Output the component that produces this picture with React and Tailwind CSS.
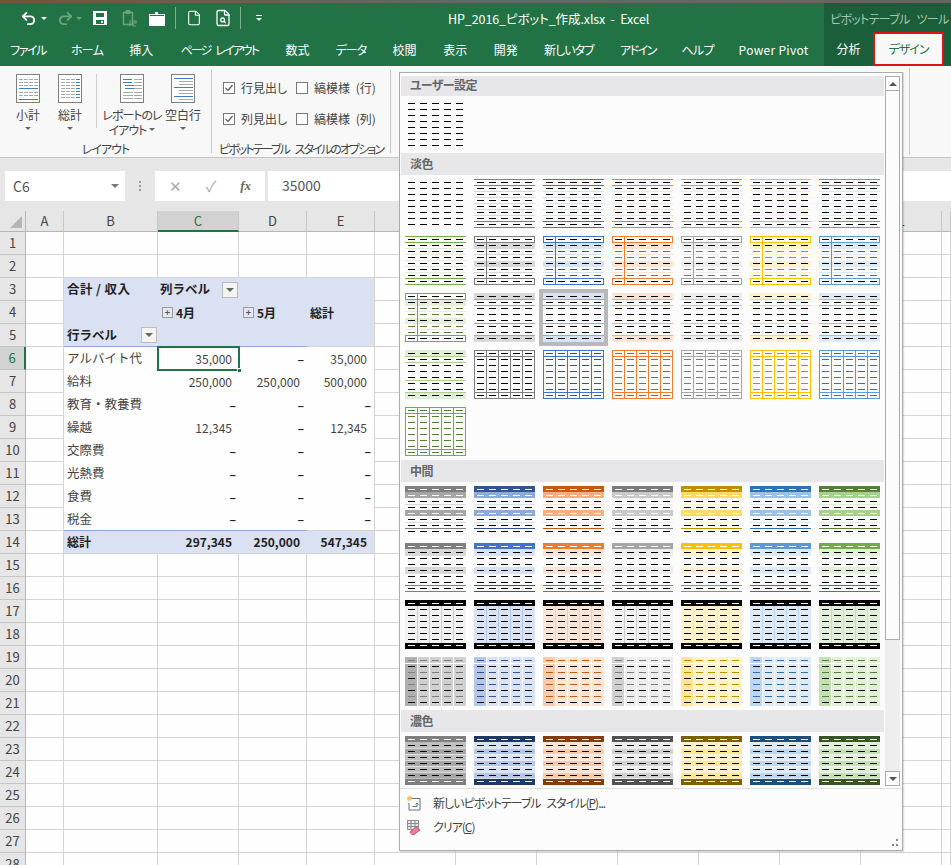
import React from 'react'
import { Undo2, Redo2, File, FileSearch } from 'lucide-react'

const tabs = [
  ['ファイル', 'w-[34px] tracking-[-1.5px]'], ['ホーム', 'w-[31px] tracking-[-0.7px]'], ['挿入', 'w-[24px]'], ['ページ レイアウト', 'w-[79px] tracking-[-1.9px] [word-spacing:4px]'],
  ['数式', 'w-[24px]'], ['データ', 'w-[30px] tracking-[-1px]'], ['校閲', 'w-[24px]'], ['表示', 'w-[24px]'], ['開発', 'w-[24px]'],
  ['新しいタブ', 'w-[49px] tracking-[-1px]'], ['アドイン', 'w-[36px] tracking-[-1.5px]'], ['ヘルプ', 'w-[30px] tracking-[-0.7px]'], ['Power Pivot', 'w-[69px] tracking-[0.3px]'],
]

const light = [
  { c: '#7f7f7f', t: '#d9d9d9', d: '#000000' },
  { c: '#4472c4', t: '#d9e2f3', d: '#2f5597' },
  { c: '#ed7d31', t: '#fbe4d5', d: '#c55a11' },
  { c: '#a5a5a5', t: '#ededed', d: '#7b7b7b' },
  { c: '#ffc000', t: '#fff2cc', d: '#bf8f00' },
  { c: '#5b9bd5', t: '#deeaf6', d: '#2e74b5' },
  { c: '#70ad47', t: '#e2efd9', d: '#538135' },
]
const mid = ['#a6a6a6', '#8eaadb', '#f4b083', '#c9c9c9', '#ffd966', '#9cc2e5', '#a8d08d']
const deep = ['#7f7f7f', '#1f3864', '#833c0b', '#525252', '#7f6000', '#1f4e79', '#385623']
const head = ['#7f7f7f', '#2f5597', '#c55a11', '#7b7b7b', '#bf8f00', '#2e74b5', '#538135']
const darkBand = ['#a6a6a6', '#b4c7e7', '#f8cbad', '#d0d0d0', '#ffe699', '#bdd7ee', '#c5e0b4']
const darkBase = ['#bfbfbf', '#dae3f3', '#fbe5d6', '#ededed', '#fff2cc', '#deebf7', '#e2f0d9']
const m3Base = ['#f2f2f2', '#dae3f3', '#fbe5d6', '#f2f2f2', '#fff2cc', '#deebf7', '#e2f0d9']
const m3Line = ['#cccccc', '#b4c7e7', '#f8cbad', '#cccccc', '#ffe699', '#bdd7ee', '#c5e0b4']

const dashRows = [3, 9, 15, 21, 27, 33, 39, 45]
const dashCols = [3, 15, 27, 39, 51]

const Dashes = ({ color }) =>
  dashRows.map((y, j) =>
    dashCols.map((x, i) => <rect key={`${j}-${i}`} x={x} y={y} width="7" height="1" fill={color(j, i)} />)
  )

const Bar = ({ y, h = 1, fill, o }) => <rect x="0" y={y} width="61" height={h} fill={fill} opacity={o} />
const Col = ({ x, fill }) => <rect x={x} y="0" width="1" height="49" fill={fill} />

const Swatch = ({ type, i = 0 }) => {
  const t = light[i]
  let body = null
  if (type === 'plain') body = <Dashes color={() => '#000'} />
  if (type === 'l1') {
    body = (
      <>
        {[12, 18, 24, 30, 36].map((y) => <Bar key={y} y={y} fill={t.t} />)}
        <Bar y={0} fill={t.c} /><Bar y={6} fill={t.c} /><Bar y={42} fill={t.c} /><Bar y={48} fill={t.c} />
        <Dashes color={() => '#000'} />
      </>
    )
  }
  if (type === 'l2') {
    body = (
      <>
        <Bar y={7} h={6} fill={t.t} /><Bar y={25} h={6} fill={t.t} /><Bar y={18} fill={t.t} /><Bar y={36} fill={t.t} />
        <Col x={12} fill={t.c} />
        <rect x="0.5" y="0.5" width="60" height="6" fill="none" stroke={t.c} />
        <rect x="0.5" y="42.5" width="60" height="6" fill="none" stroke={t.c} />
        <Dashes color={(j) => ([2, 3, 5, 6].includes(j) ? t.d : '#000')} />
      </>
    )
  }
  if (type === 'l3') {
    body = (
      <>
        <Bar y={0} h={6} fill={t.t} /><Bar y={42} h={7} fill={t.t} />
        {[6, 12, 30, 42].map((y) => <Bar key={y} y={y} fill={mid[i]} />)}
        <Dashes color={() => '#000'} />
      </>
    )
  }
  if (type === 'grid') {
    body = (
      <>
        <rect x="0.5" y="0.5" width="60" height="48" fill="none" stroke={t.c} />
        <Bar y={6} fill={t.c} /><Bar y={42} fill={t.c} />
        {[12, 24, 36, 48].map((x) => <Col key={x} x={x} fill={t.c} />)}
        <Dashes color={() => t.d} />
      </>
    )
  }
  if (type === 'm1') {
    body = (
      <>
        <Bar y={0} h={6} fill={head[i]} /><Bar y={6} h={6} fill={mid[i]} /><Bar y={24} h={6} fill={mid[i]} />
        <Bar y={18} fill={t.t} /><Bar y={36} fill={t.t} /><Bar y={42} fill={head[i]} />
        <Dashes color={(j) => ([0, 1, 4].includes(j) ? '#fff' : '#000')} />
      </>
    )
  }
  if (type === 'm2') {
    body = (
      <>
        <Bar y={0} h={6} fill={t.c} /><Bar y={6} h={7} fill={t.t} /><Bar y={24} h={7} fill={t.t} />
        <Bar y={42} fill={head[i]} /><Bar y={48} fill={head[i]} />
        <Dashes color={(j) => (j === 0 ? '#fff' : '#000')} />
      </>
    )
  }
  if (type === 'm3') {
    body = (
      <>
        <rect x="0" y="0" width="61" height="49" fill={m3Base[i]} />
        {[12, 24, 36, 48].map((x) => <Col key={x} x={x} fill={m3Line[i]} />)}
        <Bar y={0} h={6} fill="#000" /><Bar y={43} h={6} fill="#000" />
        <Dashes color={(j) => (j === 0 || j === 7 ? '#fff' : '#000')} />
      </>
    )
  }
  if (type === 'm4') {
    body = (
      <>
        <rect x="0" y="0" width="61" height="49" fill={i === 0 ? '#d0d0d0' : darkBase[i]} />
        <rect x="0" y="0" width="12" height="49" fill={i === 0 ? '#b0b0b0' : darkBand[i]} />
        {[12, 24, 36, 48].map((x) => <Col key={x} x={x} fill="#ffffff" />)}
        <Bar y={6} fill="#ffffff" />
        <Dashes color={(j) => (j % 2 === 0 ? head[i] : '#000')} />
      </>
    )
  }
  if (type === 'd1') {
    body = (
      <>
        <rect x="0" y="0" width="61" height="49" fill={darkBase[i]} />
        {[12, 24, 36].map((y) => <Bar key={y} y={y} h={6} fill={darkBand[i]} />)}
        {[12, 18, 24, 30, 36].map((y) => <Bar key={y} y={y} fill="#ffffff" o={0.6} />)}
        <Bar y={0} h={6} fill={deep[i]} /><Bar y={43} h={6} fill={deep[i]} />
        <Dashes color={(j) => (j === 0 || j === 7 ? '#fff' : '#000')} />
      </>
    )
  }
  return (
    <svg width="61" height="49" viewBox="0 0 61 49" shapeRendering="crispEdges" className="block">
      {body}
    </svg>
  )
}

const seven = (type) => [0, 1, 2, 3, 4, 5, 6].map((i) => ({ type, i }))

const sections = [
  { title: 'ユーザー設定', h: 'h-[20px] pb-[2px]', items: [{ type: 'plain' }] },
  { title: '淡色', h: 'h-[22px]', items: [{ type: 'plain' }, ...seven('l1').slice(0, 6), ...seven('l1').slice(6), ...seven('l2'), ...seven('l3'), ...seven('grid')] },
  { title: '中間', h: 'h-[22px]', items: [...seven('m1'), ...seven('m2'), ...seven('m3'), ...seven('m4')] },
  { title: '濃色', h: 'h-[22px]', items: seven('d1') },
]

const StyleGallery = () => (
  <div className="absolute left-[399px] top-[72px] z-20 flex h-[779px] w-[504px] flex-col border border-[#ababab] bg-[#fcfcfc] shadow-[1px_1px_1px_rgba(0,0,0,0.12)]">
    <div className="flex h-[713px] pt-[3px]">
      <div className="w-[484px] overflow-hidden pl-[1px]">
        {sections.map((s) => (
          <div key={s.title}>
            <div className={`${s.h} flex items-center bg-[#e7e7ea] pl-[9px] text-[12px] font-bold tracking-[-0.6px] text-[#666]`}>{s.title}</div>
            <div className="grid grid-cols-[repeat(7,61px)] gap-2 py-1 pl-[4px]">
              {s.items.map((it, n) => (
                <div key={n} className={it.type === 'l3' && it.i === 1 ? 'outline-4 outline-[#b9b9b9]' : ''}>
                  <Swatch type={it.type} i={it.i} />
                </div>
              ))}
            </div>
          </div>
        ))}
      </div>
      <div className="ml-[1px] flex w-[15px] flex-col bg-[#eeeeee]">
        <div className="flex h-[15px] items-center justify-center border border-[#ababab] bg-[#fcfcfc]">
          <span className="h-0 w-0 border-x-[4px] border-b-[4px] border-x-transparent border-b-[#555]" />
        </div>
        <div className="h-[549px] border-x border-b border-[#ababab] bg-[#fcfcfc]" />
        <div className="flex-1" />
        <div className="flex h-[15px] items-center justify-center border border-[#ababab] bg-[#fcfcfc]">
          <span className="h-0 w-0 border-x-[4px] border-t-[4px] border-x-transparent border-t-[#555]" />
        </div>
      </div>
    </div>
    <div className="mt-[2px] border-t border-[#e0e0e0] pt-[2px] text-[12px] tracking-[-1px] text-[#444] [word-spacing:4px]">
      <div className="flex h-[24px] items-center">
        <svg width="16" height="16" viewBox="0 0 16 16" className="ml-[6px] mr-[11px]">
          <circle cx="3.5" cy="3.5" r="2.5" fill="#f5c26b" />
          <path d="M5.5 3.5h8.5v11.5h-11v-7" fill="#fff" stroke="#6d6d6d" />
          <path d="M6.5 11.5h4.5M11 11.5v-3M9.5 9.5l1.5-1.5 1.5 1.5" fill="none" stroke="#3f7fc1" />
        </svg>
        <span>新しいピボットテーブル スタイル(<span className="underline">P</span>)...</span>
      </div>
      <div className="flex h-[24px] items-center">
        <svg width="16" height="16" viewBox="0 0 16 16" className="ml-[6px] mr-[11px]">
          <path d="M1.5 1.5h11v9h-11zM1.5 4.5h11M1.5 7.5h11M5 1.5v9M9 1.5v9" fill="#e6e6ee" stroke="#8a8a8a" />
          <path d="M4 13l6-5 4 3-6 4.5h-2z" fill="#ee7f96" stroke="#c9546e" />
        </svg>
        <span>クリア(<span className="underline">C</span>)</span>
      </div>
    </div>
    <div className="mt-auto flex justify-end pb-[3px] pr-[3px]">
      <svg width="8" height="8" viewBox="0 0 8 8" shapeRendering="crispEdges">
        <rect x="5" y="0" width="2" height="2" fill="#888" />
        <rect x="1" y="5" width="2" height="2" fill="#888" />
        <rect x="5" y="5" width="2" height="2" fill="#888" />
      </svg>
    </div>
  </div>
)

const Save = () => (
  <svg width="16" height="16" viewBox="0 0 16 16" shapeRendering="crispEdges">
    <path fillRule="evenodd" d="M1 1h14v14H1zM4 2.5v4.5h8V2.5zM4 10v3.5h8V10z" fill="#fff" />
    <rect x="8.5" y="10.5" width="2" height="2.5" fill="#fff" />
  </svg>
)
const Paste = () => (
  <svg width="16" height="18" viewBox="0 0 16 18" fill="none" stroke="#6fa386">
    <path d="M2.5 3.5h9v12h-9z" strokeWidth="1.5" />
    <path d="M5 1.5h4v3H5z" fill="#6fa386" />
    <path d="M9 11v6M12 12h3v2h-3v3h3" strokeWidth="1.2" />
  </svg>
)
const Folder = () => (
  <svg width="16" height="15" viewBox="0 0 16 15" shapeRendering="crispEdges">
    <path d="M0 3h6V1h3v2h7v12H0z" fill="#fff" />
    <rect x="1" y="4" width="14" height="1" fill="#217346" />
  </svg>
)
const Caret = ({ color = 'border-t-white' }) => (
  <span className={`h-0 w-0 border-x-[3px] border-t-[3px] border-x-transparent ${color}`} />
)

const QuickAccess = () => (
  <div className="flex h-[30px] items-center pl-[20px] text-white">
    <Undo2 size={17} strokeWidth={2.6} />
    <span className="ml-[4px] flex"><Caret /></span>
    <Redo2 size={17} strokeWidth={2.6} className="ml-[10px] text-[#6fa386]" />
    <span className="ml-[2px] flex"><Caret color="border-t-[#6fa386]" /></span>
    <span className="ml-[10px] flex"><Save /></span>
    <span className="ml-[13px] flex"><Paste /></span>
    <span className="ml-[12px] flex"><Folder /></span>
    <span className="ml-[10px] h-[22px] w-px bg-[#7fab93]" />
    <File size={16} strokeWidth={1.6} className="ml-[10px]" />
    <FileSearch size={18} strokeWidth={1.7} className="ml-[12px]" />
    <span className="ml-[8px] h-[22px] w-px bg-[#7fab93]" />
    <span className="ml-[15px] flex flex-col items-center gap-[2px]">
      <span className="h-px w-[6px] bg-white" />
      <Caret />
    </span>
    <span className="ml-[186px] whitespace-nowrap pt-[2px] text-[12.5px] leading-none tracking-[-0.1px]">HP_2016_ピボット_作成.xlsx &nbsp;-&nbsp; Excel</span>
  </div>
)

const GreenBar = () => (
  <div className="relative z-10 flex h-[63px] bg-[#217346]">
    <div className="w-[824px]">
      <QuickAccess />
      <div className="flex h-[33px] items-center gap-[26.6px] pl-[11px] text-[12px] text-white">
        {tabs.map(([label, w]) => (
          <span key={label} className={`${w} flex justify-center whitespace-nowrap`}>{label}</span>
        ))}
      </div>
    </div>
    <div className="flex w-[127px] flex-col bg-[#1b5e3a]">
      <div className="flex h-[30px] items-center whitespace-nowrap pl-[6px] pt-[2px] text-[12px] tracking-[-0.7px] text-[#a6c6b3] [word-spacing:5px]">ピボットテーブル ツール</div>
      <div className="flex h-[35px] text-[12px]">
        <span className="flex h-[33px] w-[49px] items-center justify-center text-white">分析</span>
        <span className="flex w-[71px] items-center justify-center border-2 border-[#e0101a] bg-[#f8f8f8] tracking-[-1px] text-[#217346]">デザイン</span>
      </div>
    </div>
  </div>
)

const icons = {
  subtotal: (
    <>
      {[5, 8, 11, 18, 21].map((y) => [4, 9, 14, 19].map((x) => <rect key={`${x}${y}`} x={x} y={y} width="4" height="1" fill="#a8a8a8" />))}
      <rect x="4" y="14" width="19" height="1" fill="#3f7fc1" />
      <rect x="4" y="25" width="19" height="1" fill="#3f7fc1" />
    </>
  ),
  total: (
    <>
      {[5, 8, 11, 14, 17, 20, 23].map((y) => [4, 9, 14].map((x) => <rect key={`${x}${y}`} x={x} y={y} width="4" height="1" fill="#a8a8a8" />))}
      {[5, 8, 11, 14, 17, 20, 23].map((y) => <rect key={y} x="19" y={y} width="4" height="1" fill="#3f7fc1" />)}
    </>
  ),
  report: (
    <>
      <rect x="4" y="5" width="9" height="1" fill="#3f7fc1" />
      <rect x="4" y="8" width="9" height="1" fill="#3f7fc1" />
      <rect x="6" y="11" width="9" height="1" fill="#3f7fc1" />
      <rect x="6" y="14" width="9" height="1" fill="#3f7fc1" />
      {[5, 8, 11, 14, 18, 21, 24].map((y) => <rect key={y} x="15" y={y} width="8" height="1" fill="#a8a8a8" />)}
      {[18, 21, 24].map((y) => <rect key={y} x="4" y={y} width="10" height="1" fill="#a8a8a8" />)}
    </>
  ),
  blank: (
    <>
      {[4, 13, 22].map((y) => <rect key={y} x="4" y={y} width="19" height="1" fill="#3f7fc1" />)}
      {[7, 10, 16, 19, 25].map((y) => <rect key={y} x="9" y={y} width="14" height="1" fill="#a8a8a8" />)}
    </>
  ),
}

const DocIcon = ({ name }) => (
  <svg width="24" height="29" viewBox="0 0 24 29" shapeRendering="crispEdges" className="shrink-0">
    <rect x="0.5" y="0.5" width="23" height="28" fill="#fff" stroke="#7f7f7f" />
    <g transform="translate(-1.5 0)">{icons[name]}</g>
  </svg>
)

const RibbonCaret = () => <span className="h-0 w-0 border-x-[3px] border-t-[3px] border-x-transparent border-t-[#666]" />

const RibbonButton = ({ name, label, w }) => (
  <div className={`${w} flex flex-col items-center`}>
    <DocIcon name={name} />
    <span className="mt-[4px] h-[16px] whitespace-nowrap leading-[16px]">{label}</span>
    <span className="mt-[4px] flex"><RibbonCaret /></span>
  </div>
)

const Check = ({ on, label }) => (
  <div className="flex items-center gap-[6px]">
    <span className="flex h-[12px] w-[12px] items-center justify-center border border-[#777] bg-white">
      {on && (
        <svg width="10" height="10" viewBox="0 0 10 10" fill="none" stroke="#666" strokeWidth="1.4">
          <path d="M1.5 5l2.5 2.5 4.5-5.5" />
        </svg>
      )}
    </span>
    <span className="whitespace-nowrap [word-spacing:3px]">{label}</span>
  </div>
)

const Ribbon = () => (
  <div className="flex h-[92px] border-b border-[#c6c6c6] bg-[#f8f8f8] text-[12px] text-[#444]">
    <div className="my-[4px] flex w-[212px] flex-col border-r border-[#c6c6c6]">
      <div className="flex h-[71px] pl-[7px] pt-[4px]">
        <RibbonButton name="subtotal" label="小計" w="w-[42px]" />
        <RibbonButton name="total" label="総計" w="w-[42px]" />
        <span className="ml-[5px] mr-[6px] h-[54px] w-px bg-[#d0d0d0]" />
        <div className="flex w-[58px] flex-col items-center tracking-[-1px]">
          <DocIcon name="report" />
          <span className="mt-[4px] h-[15px] whitespace-nowrap leading-[15px]">レポートのレ</span>
          <span className="flex h-[15px] items-center gap-[3px] whitespace-nowrap leading-[15px]">イアウト <RibbonCaret /></span>
        </div>
        <RibbonButton name="blank" label="空白行" w="w-[44px]" />
      </div>
      <div className="-mb-[3px] mt-auto text-center leading-[14px] tracking-[-1px]">レイアウト</div>
    </div>
    <div className="my-[4px] flex w-[179px] flex-col border-r border-[#c6c6c6]">
      <div className="grid grid-cols-[73px_auto] gap-y-[13px] pl-[11px] pt-[9px]">
        <Check on label="行見出し" />
        <Check label="縞模様 (行)" />
        <Check on label="列見出し" />
        <Check label="縞模様 (列)" />
      </div>
      <div className="-mb-[3px] mt-auto whitespace-nowrap text-center leading-[14px] tracking-[-1.9px] [word-spacing:5px]">ピボットテーブル スタイルのオプション</div>
    </div>
    <div className="my-[2px] w-[519px] border-r border-[#c6c6c6]" />
  </div>
)

const FormulaBar = () => (
  <div className="flex h-[47px] items-start bg-[#e6e6e6] pl-[5px] pt-[13px] text-[14px] text-[#555]">
    <div className="flex h-[30px] w-[120px] items-center justify-between bg-white pl-[8px] pr-[6px]">
      <span>C6</span>
      <span className="h-0 w-0 border-x-[4px] border-t-[4px] border-x-transparent border-t-[#777]" />
    </div>
    <div className="flex h-[30px] w-[30px] flex-col items-center justify-center gap-[2px]">
      <span className="h-[2px] w-[2px] bg-[#999]" />
      <span className="h-[2px] w-[2px] bg-[#999]" />
      <span className="h-[2px] w-[2px] bg-[#999]" />
    </div>
    <div className="flex h-[30px] w-[110px] items-center justify-around bg-white px-[2px] text-[#aaa]">
      <span className="text-[15px]">✕</span>
      <span className="text-[15px]">✓</span>
      <span className="font-['Liberation_Serif'] text-[13px] font-bold italic text-[#666]">fx</span>
    </div>
    <div className="ml-[3px] flex h-[30px] flex-1 items-center bg-white pb-[2px] pl-[14px]">35000</div>
  </div>
)

const columns = ['A', 'B', 'C', 'D', 'E', 'F', 'G', 'H', 'I', 'J', 'K', 'L', '']

const expense = [
  ['アルバイト代', '35,000', '–', '35,000'],
  ['給料', '250,000', '250,000', '500,000'],
  ['教育・教養費', '–', '–', '–'],
  ['繰越', '12,345', '–', '12,345'],
  ['交際費', '–', '–', '–'],
  ['光熱費', '–', '–', '–'],
  ['食費', '–', '–', '–'],
  ['税金', '–', '–', '–'],
]

const FilterBtn = () => (
  <span className="flex h-[16px] w-[16px] shrink-0 items-center justify-center border border-[#bdbdbd] bg-[#f4f4f4]">
    <span className="h-0 w-0 border-x-[4px] border-t-[4px] border-x-transparent border-t-[#666]" />
  </span>
)

const Plus = () => (
  <span className="mr-[3px] flex h-[11px] w-[11px] items-center justify-center border border-[#9a9a9a] bg-[#e4e8f2] text-[9px] leading-none text-[#555]">+</span>
)

const Num = ({ v, bold }) => (
  <div className={`flex h-full items-center justify-end ${v === '–' ? 'pr-[3px] font-bold text-[#222]' : 'pr-[7px]'} ${bold ? 'font-bold text-[#222]' : ''}`}>{v}</div>
)

const pivotRows = {
  3: [
    <div className="flex h-full items-center whitespace-nowrap pl-[3px] text-[12.5px] font-bold tracking-[0.4px] text-[#222]">合計 / 収入</div>,
    <div className="flex h-full items-center justify-between pl-[2px] pr-[1px] text-[12.5px] font-bold text-[#222]"><span className="whitespace-nowrap">列ラベル</span><FilterBtn /></div>,
    null,
    null,
  ],
  4: [
    null,
    <div className="flex h-full items-center pl-[4px] font-bold text-[#222]"><Plus />4月</div>,
    <div className="flex h-full items-center pl-[4px] font-bold text-[#222]"><Plus />5月</div>,
    <div className="flex h-full items-center pl-[3px] font-bold text-[#222]">総計</div>,
  ],
  5: [
    <div className="flex h-full items-center justify-between pl-[3px] pr-[1px] text-[12.5px] font-bold text-[#222]"><span>行ラベル</span><FilterBtn /></div>,
    null,
    null,
    null,
  ],
  14: [
    <div className="flex h-full items-center pl-[3px] font-bold text-[#222]">総計</div>,
    <Num v="297,345" bold />,
    <Num v="250,000" bold />,
    <Num v="547,345" bold />,
  ],
}
expense.forEach((row, n) => {
  pivotRows[6 + n] = [
    <div className="flex h-full items-center whitespace-nowrap pl-[3px] text-[12.5px]">{row[0]}</div>,
    <Num v={row[1]} />,
    <Num v={row[2]} />,
    <Num v={row[3]} />,
  ]
})

const Sheet = () => {
  const rows = Array.from({ length: 28 }, (_, i) => i + 1)
  return (
    <div className="bg-[#e6e6e6] pt-[6px] text-[12px] text-[#444] [font-feature-settings:normal]">
      <div className="grid grid-cols-[26px_38px_94px_81px_68px_68px_81px_81px_81px_81px_81px_81px_81px_9px] grid-rows-[21px_repeat(28,23px)]">
        <div className="flex items-end justify-end border-b border-r border-[#b5b5b5] pb-[3px] pr-[3px]">
          <span className="h-0 w-0 border-b-[12px] border-l-[12px] border-b-[#b5b5b5] border-l-transparent" />
        </div>
        {columns.map((c) => (
          <div
            key={c || 'end'}
            className={`flex items-center justify-center border-r border-[#c6c6c6] text-[13px] ${
              c === 'C' ? 'border-b-2 border-b-[#217346] bg-[#d2d2d2] text-[#217346]' : 'border-b border-b-[#b5b5b5]'
            }`}
          >
            {c}
          </div>
        ))}
        {rows.map((r) => (
          <React.Fragment key={r}>
            <div
              className={`flex items-center justify-center border-b border-[#c6c6c6] text-[13px] ${
                r === 6 ? 'border-r-2 border-r-[#217346] bg-[#d2d2d2] text-[#217346]' : 'border-r border-r-[#b5b5b5]'
              }`}
            >
              {r}
            </div>
            {columns.map((c, ci) => {
              const inPivot = pivotRows[r] && ci >= 1 && ci <= 4
              const tinted = r <= 5 || r === 14
              const active = r === 6 && c === 'C'
              const pivotClass = `${tinted ? 'bg-[#d9e1f2]' : 'bg-[#fefefe]'} ${r === 5 || r === 13 ? 'border-b border-[#8ea9db]' : ''} ${r === 14 ? 'border-b border-[#d4d4d4]' : ''} ${ci === 4 ? 'border-r border-[#d4d4d4]' : ''}`
              return (
                <div
                  key={c + ci}
                  className={`min-w-0 ${inPivot ? pivotClass : 'border-b border-r border-[#d4d4d4] bg-[#fefefe]'} ${
                    active ? 'relative z-10 outline-2 outline-offset-[-1px] outline-[#217346]' : ''
                  }`}
                >
                  {inPivot ? pivotRows[r][ci - 1] : null}
                  {active && <span className="absolute -bottom-[3px] -right-[3px] h-[5px] w-[5px] border border-white bg-[#217346]" />}
                </div>
              )
            })}
          </React.Fragment>
        ))}
      </div>
    </div>
  )
}

export default function App() {
  return (
    <div className="relative h-[865px] w-[951px] overflow-hidden bg-white font-['Noto_Sans_CJK_JP','Noto_Sans',sans-serif] [font-feature-settings:'palt']">
      <div className="h-[3px] bg-gradient-to-r from-[#6b5a3a] via-[#5d6a66] to-[#6a6460]" />
      <GreenBar />
      <Ribbon />
      <FormulaBar />
      <Sheet />
      <StyleGallery />
    </div>
  )
}
